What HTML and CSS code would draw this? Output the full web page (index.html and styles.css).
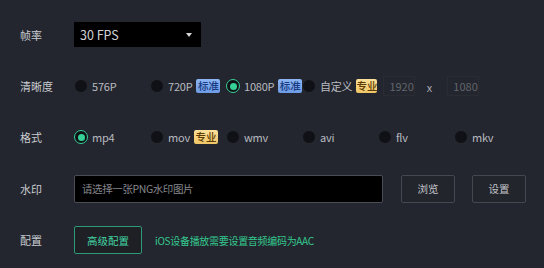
FILE: index.html
```html
<!DOCTYPE html>
<html lang="zh-CN">
<head>
<meta charset="utf-8">
<link rel="stylesheet" href="styles.css">
</head>
<body>
<div class="panel">
  <div class="row">
    <div class="label">帧率</div>
    <div class="select">
      <span>30 FPS</span>
      <span class="arrow"></span>
    </div>
  </div>

  <div class="row">
    <div class="label">清晰度</div>
    <div class="options">
      <div class="opt"><span class="radio"></span><span class="txt">576P</span></div>
      <div class="opt"><span class="radio"></span><span class="txt">720P</span><span class="badge blue">标准</span></div>
      <div class="opt"><span class="radio on"></span><span class="txt">1080P</span><span class="badge blue">标准</span></div>
      <div class="opt"><span class="radio"></span><span class="txt">自定义</span><span class="badge gold">专业</span>
        <span class="num">1920</span><span class="times">x</span><span class="num">1080</span></div>
    </div>
  </div>

  <div class="row">
    <div class="label">格式</div>
    <div class="options">
      <div class="opt"><span class="radio on"></span><span class="txt">mp4</span></div>
      <div class="opt"><span class="radio"></span><span class="txt">mov</span><span class="badge gold">专业</span></div>
      <div class="opt"><span class="radio"></span><span class="txt">wmv</span></div>
      <div class="opt"><span class="radio"></span><span class="txt">avi</span></div>
      <div class="opt"><span class="radio"></span><span class="txt">flv</span></div>
      <div class="opt"><span class="radio"></span><span class="txt">mkv</span></div>
    </div>
  </div>

  <div class="row">
    <div class="label">水印</div>
    <div class="file">请选择一张PNG水印图片</div>
    <div class="btn">浏览</div>
    <div class="btn">设置</div>
  </div>

  <div class="row">
    <div class="label">配置</div>
    <div class="btn green">高级配置</div>
    <div class="note">iOS设备播放需要设置音频编码为AAC</div>
  </div>
</div>
</body>
</html>
```

FILE: styles.css
```css
html, body {
  margin: 0;
  padding: 0;
  background: #23262e;
  width: 544px;
  height: 268px;
  overflow: hidden;
}
body {
  font-family: "Noto Sans CJK SC", "Noto Sans", sans-serif;
  font-size: 12px;
  color: #c4c6cb;
}
.panel {
  padding: 9px 0 0 20px;
}
.row {
  height: 51.4px;
  display: flex;
  align-items: center;
}
.label {
  width: 54px;
  flex: none;
  font-size: 11px;
  color: #c8cace;
}
.select {
  width: 127px;
  height: 25px;
  box-sizing: border-box;
  background: #000;
  display: flex;
  align-items: center;
  justify-content: space-between;
  padding: 0 9px 0 6px;
  color: #d0d2d6;
  font-size: 12.5px;
}
.arrow {
  width: 0;
  height: 0;
  border-left: 3.5px solid transparent;
  border-right: 3.5px solid transparent;
  border-top: 4px solid #d8d8d8;
}
.options {
  display: grid;
  grid-template-columns: repeat(6, 76px);
  align-items: center;
}
.opt {
  display: flex;
  align-items: center;
  white-space: nowrap;
}
.radio {
  width: 14px;
  height: 14px;
  box-sizing: border-box;
  border-radius: 50%;
  background: #0f1116;
  border: 1px solid #262930;
  flex: none;
  display: flex;
  align-items: center;
  justify-content: center;
}
.radio.on {
  border: 1.5px solid #36d197;
}
.radio.on::after {
  content: "";
  width: 7px;
  height: 7px;
  border-radius: 50%;
  background: #36d197;
}
.txt {
  margin-left: 4px;
  color: #b9bbc0;
  font-size: 11px;
  letter-spacing: -0.2px;
}
.badge {
  margin-left: 4px;
  width: 24px;
  height: 14px;
  line-height: 14px;
  text-align: center;
  font-size: 10.5px;
  border-radius: 2px;
  font-weight: 500;
}
.badge.blue {
  background: linear-gradient(#8db5f3, #6d9be6);
  color: #173a80;
}
.badge.gold {
  background: linear-gradient(#fbe09a, #efc566);
  color: #5a3a05;
}
.num {
  margin-left: 6px;
  width: 40px;
  height: 20px;
  box-sizing: border-box;
  border: 1px solid #292c33;
  color: #62656c;
  font-size: 11px;
  line-height: 18px;
  padding-left: 5px;
}
.times {
  margin: 2px 9px 0 12px;
  color: #a8aab0;
  font-size: 11px;
}
.file {
  width: 309px;
  height: 28px;
  box-sizing: border-box;
  background: #000;
  border: 1px solid #4a4d55;
  border-radius: 2px;
  color: #85878c;
  font-size: 10.5px;
  line-height: 26px;
  padding-left: 7px;
  letter-spacing: -0.4px;
}
.btn {
  width: 54px;
  height: 28px;
  box-sizing: border-box;
  border: 1px solid #44474f;
  border-radius: 2px;
  background: #23252c;
  color: #c2c4c9;
  font-size: 10.5px;
  display: flex;
  align-items: center;
  justify-content: center;
  margin-left: 17px;
}
.file + .btn {
  margin-left: 18px;
}
.btn.green {
  margin-left: 0;
  width: 68px;
  border-color: #2f9a78;
  background: #1e2026;
  color: #43d3a0;
}
.note {
  margin-left: 13px;
  color: #34c98f;
  font-size: 10px;
  letter-spacing: -0.3px;
}
```
